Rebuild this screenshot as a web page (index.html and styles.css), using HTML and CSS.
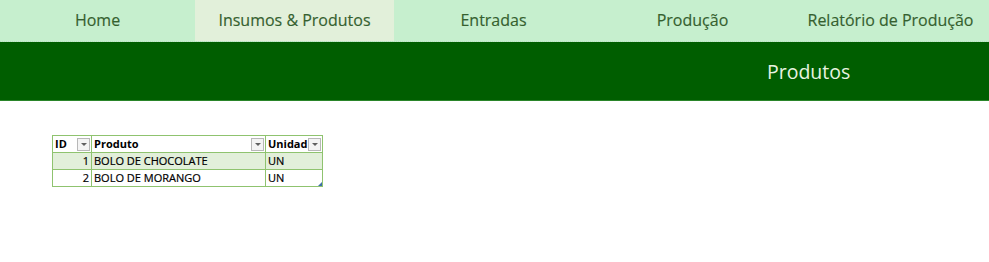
FILE: index.html
```html
<!DOCTYPE html>
<html>
<head>
<meta charset="utf-8">
<link rel="stylesheet" href="styles.css">
</head>
<body>
<nav class="nav">
  <div class="tab">Home</div>
  <div class="tab active">Insumos &amp; Produtos</div>
  <div class="tab">Entradas</div>
  <div class="tab">Produção</div>
  <div class="tab">Relatório de Produção</div>
</nav>
<header class="band"><h1 class="title">Produtos</h1></header>
<main class="content">
  <table class="grid">
    <thead>
      <tr>
        <th class="c-id"><div class="hcell"><span>ID</span><span class="flt"></span></div></th>
        <th class="c-prod"><div class="hcell"><span>Produto</span><span class="flt"></span></div></th>
        <th class="c-un"><div class="hcell"><span>Unidad</span><span class="flt"></span></div></th>
      </tr>
    </thead>
    <tbody>
      <tr class="odd"><td class="num">1</td><td>BOLO DE CHOCOLATE</td><td>UN</td></tr>
      <tr><td class="num">2</td><td>BOLO DE MORANGO</td><td class="last">UN</td></tr>
    </tbody>
  </table>
</main>
</body>
</html>
```
FILE: styles.css
```css
html, body { margin: 0; padding: 0; background: #fff; }
body { font-family: "Open Sans", "Noto Sans", sans-serif; width: 989px; height: 262px; overflow: hidden; }
.nav { display: grid; grid-template-columns: 195px 199px 199px 199px 197px; height: 41px; background: #c6efce; border-bottom: 1px dotted #b9e0c0; }
.tab { display: flex; align-items: center; justify-content: center; font-size: 16px; color: #35602f; padding-bottom: 1px; -webkit-text-stroke: 0.15px #35602f; }
.tab.active { background: #e2f0da; }
.tab.last-tab { padding-left: 8px; }
.band { height: 58px; background: #005e00; border-bottom: 1px solid #2a852a; display: flex; align-items: center; margin: 0; }
.title { margin: 0 0 0 767px; font-weight: 400; font-size: 19.5px; color: #e8f3e0; }
.content { padding: 34px 0 0 52px; }
.grid { border-collapse: collapse; font-family: "Open Sans", sans-serif; font-size: 11px; color: #000; }
.grid th, .grid td { border: 1px solid #8fc36f; height: 16px; padding: 0 2px; line-height: 16px; -webkit-text-stroke: 0.2px #000; }
.grid th { text-align: left; font-weight: 700; font-size: 11px; background: #fff; -webkit-text-stroke: 0; }
.c-id { width: 34px; }
.c-prod { width: 169px; }
.c-un { width: 52px; }
.hcell { display: flex; justify-content: space-between; align-items: center; }
.flt { width: 11px; height: 11px; border: 1px solid #b8b8b8; background: #f4f4f4; position: relative; margin-right: -1px; }
.flt::after { content: ""; position: absolute; left: 3px; top: 4px; border-left: 3px solid transparent; border-right: 3px solid transparent; border-top: 3px solid #606060; }
.odd td { background: #e2efda; }
.num { text-align: right; }
.last { position: relative; }
.last::after { content: ""; position: absolute; right: 0; bottom: 0; border-left: 4px solid transparent; border-bottom: 4px solid #3d6fa8; }
```
